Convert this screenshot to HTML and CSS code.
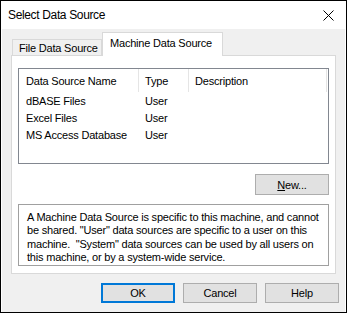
FILE: index.html
```html
<!DOCTYPE html>
<html lang="en">
<head>
    <meta charset="UTF-8">
    <title>Select Data Source</title>
    <link rel="stylesheet" href="styles.css">
</head>
<body>
    <div class="window">
        <div class="titlebar">
            <span class="title">Select Data Source</span>
            <svg class="close" width="11" height="11" viewBox="0 0 11 11">
                <path d="M0.5 0.5 L10.5 10.5 M10.5 0.5 L0.5 10.5" stroke="#000" stroke-width="1" fill="none"/>
            </svg>
        </div>
        <div class="content">
            <div class="tabs">
                <div class="tab">File Data Source</div>
                <div class="tab active">Machine Data Source</div>
            </div>
            <div class="panel">
                <div class="list">
                    <div class="list-header">
                        <div class="col name">Data Source Name</div>
                        <div class="col type">Type</div>
                        <div class="col desc">Description</div>
                    </div>
                    <div class="row">
                        <div class="col name">dBASE Files</div>
                        <div class="col type">User</div>
                    </div>
                    <div class="row">
                        <div class="col name">Excel Files</div>
                        <div class="col type">User</div>
                    </div>
                    <div class="row">
                        <div class="col name">MS Access Database</div>
                        <div class="col type">User</div>
                    </div>
                </div>
                <div class="new-row">
                    <button class="btn"><u>N</u>ew...</button>
                </div>
                <div class="info">
                    A Machine Data Source is specific to this machine, and cannot<br>
                    be shared. "User" data sources are specific to a user on this<br>
                    machine.&nbsp; "System" data sources can be used by all users on<br>
                    this machine, or by a system-wide service.
                </div>
            </div>
            <div class="buttons">
                <button class="btn default">OK</button>
                <button class="btn">Cancel</button>
                <button class="btn">Help</button>
            </div>
        </div>
    </div>
</body>
</html>
```
FILE: styles.css
```css
body {
    margin: 0;
    font-family: "Liberation Sans", Arial, sans-serif;
    font-size: 11px;
    letter-spacing: -0.2px;
    color: #000;
}
.window {
    width: 347px;
    height: 313px;
    box-sizing: border-box;
    border: 1px solid #000;
    background: #f0f0f0;
    display: flex;
    flex-direction: column;
    box-shadow: inset 1px 0 0 #fff, inset -1px 0 0 #fff;
}
.titlebar {
    height: 28px;
    background: #fff;
    display: flex;
    align-items: center;
    justify-content: space-between;
    padding: 0 12px 0 7px;
}
.title {
    font-size: 12px;
    letter-spacing: -0.35px;
}
.close {
    margin-top: 1px;
}
.content {
    flex: 1;
    display: flex;
    flex-direction: column;
    padding: 4px 10px 0 10px;
}
.tabs {
    display: flex;
    align-items: flex-end;
    padding-left: 1px;
    height: 22px;
}
.tab {
    height: 15px;
    line-height: 16px;
    padding: 0 6px;
    border: 1px solid #d9d9d9;
    border-bottom: none;
    background: #f0f0f0;
    width: 76px;
    white-space: nowrap;
}
.tab.active {
    position: relative;
    z-index: 1;
    height: 23px;
    line-height: 20px;
    margin-bottom: -1px;
    background: #fff;
    width: 105px;
    padding: 0 7px;
}
.panel {
    width: 325px;
    height: 219px;
    box-sizing: border-box;
    border: 1px solid #d9d9d9;
    background: #fff;
    padding: 12px 6px 0 6px;
    display: flex;
    flex-direction: column;
}
.list {
    height: 96px;
    box-sizing: border-box;
    border: 1px solid #828790;
    background: #fff;
}
.list-header, .row {
    display: flex;
}
.list-header {
    height: 23px;
}
.list-header .col {
    height: 23px;
    line-height: 24px;
    border-right: 1px solid #e5e5e5;
}
.row {
    height: 17px;
    line-height: 18px;
}
.col {
    box-sizing: border-box;
    white-space: nowrap;
}
.name {
    width: 120px;
    padding-left: 7px;
}
.type {
    width: 50px;
    padding-left: 6px;
}
.desc {
    width: 138px;
    padding-left: 6px;
}
.new-row {
    display: flex;
    justify-content: flex-end;
    margin-top: 10px;
}
.btn {
    width: 74px;
    height: 21px;
    box-sizing: border-box;
    border: 1px solid #adadad;
    background: #e1e1e1;
    font-family: "Liberation Sans", Arial, sans-serif;
    font-size: 11px;
    letter-spacing: -0.2px;
    color: #000;
    padding: 0;
    margin: 0;
}
.info {
    margin-top: 9px;
    height: 62px;
    box-sizing: border-box;
    border: 1px solid #a0a0a0;
    padding: 6px 0 0 8px;
    line-height: 13.4px;
    white-space: nowrap;
}
.buttons {
    display: flex;
    justify-content: flex-end;
    gap: 8px;
    margin-top: 9px;
    margin-right: -3px;
}
.buttons .btn {
    height: 20px;
}
.btn.default {
    border: 2px solid #0078d7;
}
```
